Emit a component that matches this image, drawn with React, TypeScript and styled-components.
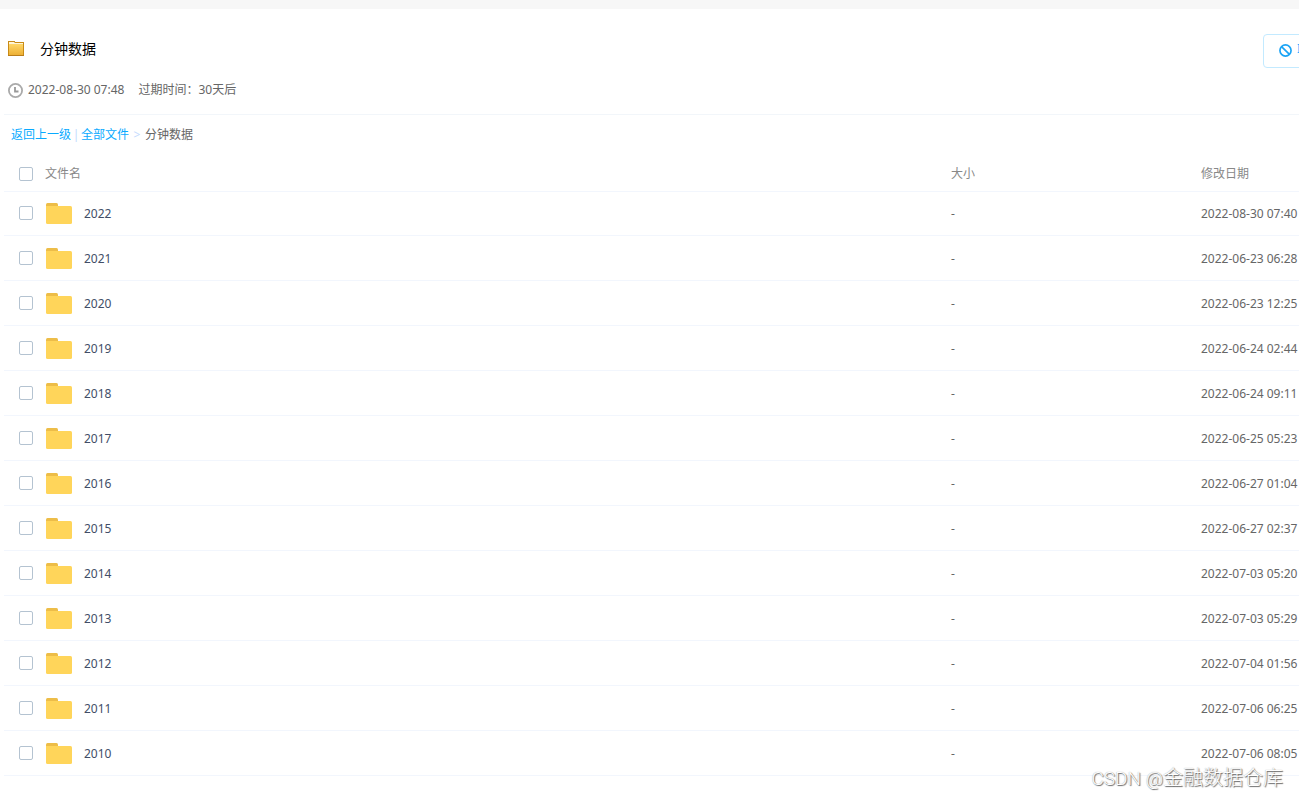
import React from "react";
import styled, { createGlobalStyle } from "styled-components";

const GlobalStyle = createGlobalStyle`
  *, *::before, *::after { box-sizing: border-box; }
  body {
    margin: 0;
    background: #fff;
    color: #666;
    font: 12px/18px "Noto Sans", "Noto Sans CJK SC", sans-serif;
  }
`;

const Page = styled.div`
  position: relative;
  min-height: 100vh;
  overflow: hidden;
`;

const TopBar = styled.div`
  height: 9px;
  background: #f7f7f7;
`;

const Main = styled.main`
  padding-left: 4px;
`;

const ShareHeader = styled.header`
  display: flex;
  align-items: flex-start;
  justify-content: space-between;
  height: 106px;
  padding: 25px 0 0 4px;
  border-bottom: 1px solid #f2f6fa;
`;

const TitleRow = styled.div`
  display: flex;
  align-items: center;
  gap: 16px;
  height: 30px;
`;

const Title = styled.h1`
  margin: 0;
  color: #000;
  font-size: 14px;
  font-weight: 400;
  line-height: 20px;
`;

const MetaRow = styled.div`
  display: flex;
  align-items: center;
  gap: 5px;
  margin-top: 17px;
`;

const Expiry = styled.span`
  margin-left: 9px;
`;

/* The action area continues past the right edge of the window. */
const Actions = styled.div`
  width: 36px;
  flex: none;
`;

const CancelButton = styled.button`
  display: flex;
  align-items: center;
  gap: 5px;
  width: 104px;
  height: 34px;
  padding: 0 15px 2px;
  border: 1px solid #c3eaff;
  border-radius: 4px;
  background: #fff;
  color: #09aaff;
  font: inherit;
  white-space: nowrap;

  svg {
    flex: none;
  }
`;

const Breadcrumb = styled.nav`
  display: flex;
  align-items: center;
  height: 38px;
  padding: 2px 0 0 7px;
`;

const CrumbLink = styled.a`
  color: #09aaff;
  text-decoration: none;
`;

const Separator = styled.span`
  width: 10px;
  color: #c4dbfe;
  text-align: center;
`;

const Arrow = styled(Separator)`
  width: 16px;
`;

const FileTable = styled.table`
  width: 100%;
  border-collapse: separate;
  border-spacing: 0;
  table-layout: fixed;
`;

const HeadCell = styled.th<{ $width?: number }>`
  width: ${({ $width }) => ($width ? `${$width}px` : "auto")};
  height: 38px;
  padding: 3px 0 0;
  color: #888;
  font-weight: 400;
  text-align: left;
`;

const Cell = styled.td`
  height: 45px;
  padding: 1px 0 0;
  border-bottom: 1px solid #f2f6fd;
  white-space: nowrap;

  tr:first-child > & {
    padding-top: 0;
    border-top: 1px solid #f2f6fd;
  }
`;

const Checkbox = styled.input`
  appearance: none;
  flex: none;
  width: 14px;
  height: 14px;
  margin: 0;
  border: 1px solid #b4c3d1;
  border-radius: 2px;
  background: #fff;

  &:checked {
    border-color: #09aaff;
    background: #09aaff;
  }

  td & {
    margin-bottom: 1px;
  }
`;

const NameGroup = styled.div<{ $gap: number }>`
  display: flex;
  align-items: center;
  gap: ${({ $gap }) => $gap}px;
  padding-left: 15px;
`;

const FileLabel = styled.label`
  display: flex;
  align-items: center;
  gap: 12px;
  color: #424e67;
`;

const Watermark = styled.div`
  position: absolute;
  right: 16px;
  bottom: 5px;
  color: #fff;
  font: 300 19px/28px Roboto, "Noto Sans CJK SC", sans-serif;
  text-shadow: 1px 1px 1px #666, 0 0 1px #999;
  pointer-events: none;
`;

const WatermarkName = styled.span`
  font-size: 20px;
`;

const SmallFolder = () => (
  <svg width="16" height="16" viewBox="0 0 16 16" aria-hidden="true">
    <defs>
      <linearGradient id="folderFill" x1="0" y1="0" x2="0" y2="1">
        <stop offset="0" stopColor="#ffd768" />
        <stop offset="1" stopColor="#edb035" />
      </linearGradient>
    </defs>
    <path d="M0 0h7v1h9v14H0z" fill="#c98b16" />
    <path d="M1 1h5l1 1h8v1H1z" fill="#fff5d8" />
    <path d="M1 3h14v11H1z" fill="url(#folderFill)" />
    <path d="M0 14h16v1H0z" fill="#b97d1a" />
  </svg>
);

const ClockIcon = () => (
  <svg width="15" height="15" viewBox="0 0 15 15" fill="none" aria-hidden="true">
    <circle cx="7.5" cy="7.5" r="6.6" stroke="#aaa" strokeWidth="1.8" />
    <path d="M7 4v4.500h3.500" stroke="#999" strokeWidth="1.8" />
  </svg>
);

const BanIcon = () => (
  <svg width="13" height="13" viewBox="0 0 14 14" fill="none" aria-hidden="true">
    <circle cx="7" cy="7" r="6" stroke="#1ba4f5" strokeWidth="1.800" />
    <path d="M3 3l8 8" stroke="#1ba4f5" strokeWidth="1.800" />
  </svg>
);

const FolderIcon = () => (
  <svg width="26" height="21" viewBox="0 0 26 21" aria-hidden="true">
    <path d="M0 5V1.5Q0 0 1.5 0h9Q12 0 12 1.5V5z" fill="#edbd48" />
    <path d="M0 3h24.5Q26 3 26 4.500v15Q26 21 24.500 21h-23Q0 21 0 19.500z" fill="#ffd55a" />
  </svg>
);

const files = [
  { name: "2022", modified: "2022-08-30 07:40" },
  { name: "2021", modified: "2022-06-23 06:28" },
  { name: "2020", modified: "2022-06-23 12:25" },
  { name: "2019", modified: "2022-06-24 02:44" },
  { name: "2018", modified: "2022-06-24 09:11" },
  { name: "2017", modified: "2022-06-25 05:23" },
  { name: "2016", modified: "2022-06-27 01:04" },
  { name: "2015", modified: "2022-06-27 02:37" },
  { name: "2014", modified: "2022-07-03 05:20" },
  { name: "2013", modified: "2022-07-03 05:29" },
  { name: "2012", modified: "2022-07-04 01:56" },
  { name: "2011", modified: "2022-07-06 06:25" },
  { name: "2010", modified: "2022-07-06 08:05" },
];

export default function App() {
  return (
    <Page lang="zh-CN">
      <GlobalStyle />
      <TopBar />
      <Main>
        <ShareHeader>
          <div>
            <TitleRow>
              <SmallFolder />
              <Title>分钟数据</Title>
            </TitleRow>
            <MetaRow>
              <ClockIcon />
              <span>2022-08-30 07:48</span>
              <Expiry>过期时间：30天后</Expiry>
            </MetaRow>
          </div>
          <Actions>
            <CancelButton type="button">
              <BanIcon />
              取消分享
            </CancelButton>
          </Actions>
        </ShareHeader>
        <Breadcrumb>
          <CrumbLink href="#up">返回上一级</CrumbLink>
          <Separator>|</Separator>
          <CrumbLink href="#all">全部文件</CrumbLink>
          <Arrow>&gt;</Arrow>
          <span>分钟数据</span>
        </Breadcrumb>
        <FileTable>
          <thead>
            <tr>
              <HeadCell>
                <NameGroup $gap={12}>
                  <Checkbox type="checkbox" id="select-all" />
                  <label htmlFor="select-all">文件名</label>
                </NameGroup>
              </HeadCell>
              <HeadCell $width={250}>大小</HeadCell>
              <HeadCell $width={98}>修改日期</HeadCell>
            </tr>
          </thead>
          <tbody>
            {files.map((file) => (
              <tr key={file.name}>
                <Cell>
                  <NameGroup $gap={13}>
                    <Checkbox type="checkbox" id={`file-${file.name}`} />
                    <FileLabel htmlFor={`file-${file.name}`}>
                      <FolderIcon />
                      {file.name}
                    </FileLabel>
                  </NameGroup>
                </Cell>
                <Cell>-</Cell>
                <Cell>{file.modified}</Cell>
              </tr>
            ))}
          </tbody>
        </FileTable>
      </Main>
      <Watermark>
        CSDN @<WatermarkName>金融数据仓库</WatermarkName>
      </Watermark>
    </Page>
  );
}
